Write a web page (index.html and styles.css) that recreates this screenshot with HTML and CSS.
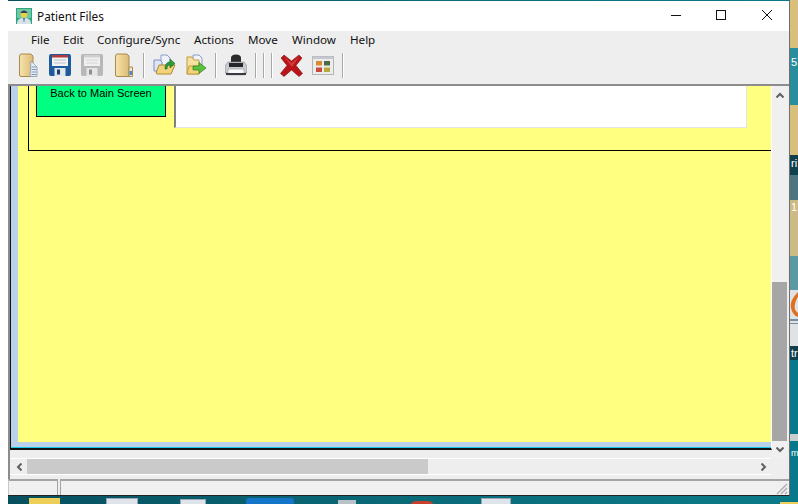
FILE: index.html
```html
<!DOCTYPE html>
<html lang="en">
<head>
  <meta charset="UTF-8">
  <title>Patient Files</title>
  <link rel="stylesheet" href="styles.css">
</head>
<body>
  <div class="desktop">
    <!-- bits of the desktop that show round the window -->
    <div class="strip">
      <div class="strip-part band-1"></div>
      <div class="strip-part band-2"><span class="strip-text s1">5</span></div>
      <div class="strip-part band-3"></div>
      <div class="strip-part band-4"><span class="strip-text s2">ri</span></div>
      <div class="strip-part band-5"></div>
      <div class="strip-part band-6"><span class="strip-text s3">1</span></div>
      <div class="strip-part band-7"></div>
      <div class="strip-part band-8">
        <svg class="flame-icon" width="8" height="34" viewBox="0 0 8 34"><path d="M8 2 C3 7 0 12 1 18 C2 23 5 26 8 27 L8 23 C5 21 4 18 5 14 C6 10 7 8 8 7Z" fill="#e07020"/><path d="M0 34h8M0 30h8" stroke="#7a8ea0" stroke-width="2"/></svg>
      </div>
      <div class="strip-part band-9"><span class="strip-text s4">tr</span></div>
      <div class="strip-part band-10"></div>
      <div class="strip-part band-11"></div>
      <div class="strip-part band-12"><span class="strip-text s5">m</span></div>
    </div>
    <div class="peek peek-folder"></div>
    <div class="peek peek-doc p1"></div>
    <div class="peek peek-doc p2"></div>
    <div class="peek peek-blue"></div>
    <div class="peek peek-grey"></div>
    <div class="peek peek-red"></div>
    <div class="peek peek-doc p3"></div>
    <div class="peek peek-yellow"></div>

    <div class="window">
      <div class="titlebar">
        <svg class="app-icon" width="16" height="16" viewBox="0 0 16 16">
          <rect width="16" height="16" fill="#2fa57f"/>
          <rect x="1" y="1" width="14" height="9" fill="#6fc9a8"/>
          <path d="M1 16 C1 11 4 10 8 10 C12 10 15 11 15 16Z" fill="#d8e2ea"/>
          <path d="M7 10h2l-1 5z" fill="#5a7088"/>
          <circle cx="8" cy="6.500" r="3.200" fill="#e8d040"/>
          <path d="M4.500 5 C5 1.500 11 1.500 11.500 5Z" fill="#39424a"/>
        </svg>
        <span class="title-text">Patient Files</span>
        <div class="win-buttons">
          <svg class="win-btn" width="46" height="30" viewBox="0 0 46 30"><path d="M20 14.500h10" stroke="#111"/></svg>
          <svg class="win-btn" width="46" height="30" viewBox="0 0 46 30"><rect x="19.500" y="9.500" width="9" height="9" fill="none" stroke="#111"/></svg>
          <svg class="win-btn" width="46" height="30" viewBox="0 0 46 30"><path d="M19 9l10 10M29 9l-10 10" stroke="#111"/></svg>
        </div>
      </div>

      <div class="menubar">
        <span class="menu-item m-file">File</span>
        <span class="menu-item m-edit">Edit</span>
        <span class="menu-item m-conf">Configure/Sync</span>
        <span class="menu-item m-actions">Actions</span>
        <span class="menu-item m-move">Move</span>
        <span class="menu-item m-window">Window</span>
        <span class="menu-item m-help">Help</span>
      </div>

      <div class="toolbar">
        <svg class="tool t1" width="20" height="25" viewBox="0 0 20 25">
          <defs>
            <linearGradient id="tan" x1="0" y1="0" x2="1" y2="0"><stop offset="0" stop-color="#f6e3ac"/><stop offset="1" stop-color="#dcbc74"/></linearGradient>
          </defs>
          <path d="M1.500 3 Q1.500 1 3.500 1 L13 1 L15 3 L15 23.500 L3 23.500 Q1.500 23.500 1.500 22Z" fill="url(#tan)" stroke="#a98a4e"/>
          <path d="M13 8l6 6v9.500h-7z" fill="#e8eef6" stroke="#8a99ad" stroke-width=".8"/>
          <path d="M13.500 14h5M13.500 16.500h5M13.500 19h5M13.500 21.500h5" stroke="#7d95b8"/>
        </svg>
        <svg class="tool t2" width="22" height="22" viewBox="0 0 22 22">
          <rect width="22" height="22" rx="2" fill="#1f5a9c"/>
          <rect x="3" y="1" width="16" height="11" fill="#f2f2f2"/>
          <rect x="3" y="1" width="16" height="2.500" fill="#b23a3a"/>
          <path d="M5 6h12M5 9h12" stroke="#b9c4d0"/>
          <rect x="5.500" y="14" width="11" height="8" fill="#dfe6ee"/>
          <rect x="8" y="15.500" width="3" height="5" fill="#1f3f68"/>
        </svg>
        <svg class="tool t3" width="22" height="22" viewBox="0 0 22 22">
          <rect width="22" height="22" rx="2" fill="#b8b8b8"/>
          <rect x="3" y="1" width="16" height="11" fill="#f0f0f0"/>
          <rect x="3" y="1" width="16" height="2.500" fill="#cfcfcf"/>
          <path d="M5 6h12M5 9h12" stroke="#d4d4d4"/>
          <rect x="5.500" y="14" width="11" height="8" fill="#e6e6e6"/>
          <rect x="8" y="15.500" width="3" height="5" fill="#8e8e8e"/>
        </svg>
        <svg class="tool t4" width="20" height="25" viewBox="0 0 20 25">
          <path d="M1.500 3 Q1.500 1 3.500 1 L13 1 L15 3 L15 23.500 L3 23.500 Q1.500 23.500 1.500 22Z" fill="url(#tan)" stroke="#a98a4e"/>
          <path d="M15 14h3.500v9.500H15z" fill="#ece6d8" stroke="#a98a4e"/>
          <rect x="15.500" y="18" width="2.500" height="4" fill="#4f86c8"/>
        </svg>
        <span class="sep s-a"></span>
        <svg class="tool t5" width="23" height="22" viewBox="0 0 23 22">
          <path d="M8 1h6l3 3v11H8z" fill="#eef2fa" stroke="#8b9ac4"/>
          <path d="M1 6h6l2 2v9H1z" fill="#dfe5f6" stroke="#7f8fc0"/>
          <path d="M3 19l3-8h16l-4 9H4z" fill="#f2d27a" stroke="#b08a30"/>
          <path d="M12 15 C12 10 14 8 17 8 L17 5 L22 9.500 L17 14 L17 11 C15 11 14 12 14 15Z" fill="#2f9a3a" stroke="#1c6a24" stroke-width=".6"/>
        </svg>
        <svg class="tool t6" width="21" height="22" viewBox="0 0 21 22">
          <path d="M7 1h6l3 3v9H7z" fill="#eef2fa" stroke="#8b9ac4"/>
          <path d="M1 3h5l2 3h5v14H1z" fill="#f6e2a0" stroke="#c49a3a"/>
          <path d="M1 20l2-8h12l-2 8z" fill="#f3d27c" stroke="#c49a3a"/>
          <path d="M7 12h6V8.500l7 5.500-7 5.500V16H7z" fill="#58c23c" stroke="#2c8024" stroke-width=".7"/>
        </svg>
        <span class="sep s-b"></span>
        <svg class="tool t7" width="22" height="23" viewBox="0 0 22 23">
          <path d="M6 10V4 Q6 0.500 11 0.500 Q16 0.500 16 4V10Z" fill="#2d2a2e"/>
          <path d="M3 8h16l3 4v7H0v-7z" fill="#c8ccd2" stroke="#7c8088" stroke-width=".6"/>
          <rect x="4" y="9" width="14" height="4" fill="#26262a"/>
          <rect x="3" y="15" width="16" height="6" fill="#f8f8f8" stroke="#9a9a9a" stroke-width=".6"/>
          <path d="M1 19h20v2H1z" fill="#3a3a40"/>
        </svg>
        <span class="sep s-c"></span>
        <span class="sep s-d"></span>
        <span class="sep s-e"></span>
        <svg class="tool t8" width="23" height="23" viewBox="0 0 23 23">
          <path d="M1 4l3-3 7.500 6L19 1l3 3-6 7.500 6.500 8L19 22.500 11.500 16 4 22.500.5 19.500 7 11.500z" fill="#bb1418" stroke="#7e0d10" stroke-width=".6"/>
          <path d="M4 2.500l7.500 6.500 7.500-6.500-6 9-1.500 1z" fill="#e0555a" opacity=".6"/>
        </svg>
        <svg class="tool t9" width="22" height="19" viewBox="0 0 22 19">
          <rect x=".5" y=".5" width="21" height="18" fill="#ececec" stroke="#b4b4b4"/>
          <rect x=".5" y=".5" width="21" height="2.500" fill="#c4c8d0"/>
          <rect x="4" y="5" width="6" height="4.500" fill="#d88a30"/>
          <rect x="12" y="5" width="6" height="4.500" fill="#4a6a48"/>
          <rect x="4" y="11.500" width="6" height="4.500" fill="#c84a3c"/>
          <rect x="12" y="11.500" width="6" height="4.500" fill="#b8a83a"/>
        </svg>
        <span class="sep s-f"></span>
      </div>

      <div class="middle">
        <div class="work">
          <div class="form">
            <div class="sheet">
              <div class="panel">
                <button class="back-btn">Back to Main Screen</button>
                <div class="notes"></div>
              </div>
            </div>
          </div>
        </div>
        <div class="vscroll">
          <svg class="arrow-up" width="8" height="6" viewBox="0 0 8 6"><path d="M0.500 5.500L4 2l3.500 3.500" fill="none" stroke="#606060" stroke-width="2"/></svg>
          <div class="vthumb"></div>
          <svg class="arrow-down" width="8" height="6" viewBox="0 0 8 6"><path d="M0.500 .5L4 4l3.500-3.500" fill="none" stroke="#606060" stroke-width="2"/></svg>
        </div>
      </div>

      <div class="hscroll">
        <span class="h-arrow">
          <svg width="6" height="8" viewBox="0 0 6 8"><path d="M5.500 .5L2 4l3.500 3.500" fill="none" stroke="#606060" stroke-width="2"/></svg>
        </span>
        <div class="hthumb"></div>
        <span class="h-arrow right">
          <svg width="6" height="8" viewBox="0 0 6 8"><path d="M.5 .5L4 4 .5 7.500" fill="none" stroke="#606060" stroke-width="2"/></svg>
        </span>
      </div>

      <div class="statusbar">
        <div class="pane pane-small"></div>
        <div class="pane pane-wide">
          <svg class="grip" width="12" height="12" viewBox="0 0 12 12"><path d="M11 1L1 11M11 5L5 11M11 9L9 11" stroke="#a8a8a8" stroke-width="1.200"/></svg>
        </div>
      </div>
    </div>
  </div>
</body>
</html>
```

FILE: styles.css
```css
* {
  margin: 0;
  padding: 0;
  box-sizing: border-box;
}

html, body {
  width: 798px;
  height: 504px;
  overflow: hidden;
  background: #fff;
}

.desktop {
  position: relative;
  margin-left: 8px;
  width: 790px;
  height: 504px;
  padding-top: 1px;
  background: linear-gradient(90deg, #064f5f, #0a6a78 50%, #0b7a88);
  overflow: hidden;
}

/* right hand strip of wallpaper */
.strip {
  position: absolute;
  top: 0;
  right: 0;
  width: 8px;
  height: 504px;
  display: flex;
  flex-direction: column;
}

.strip-part {
  position: relative;
  flex: none;
  overflow: hidden;
}

.band-1 { height: 48px; background: #d9bf7c; }
.band-2 { height: 57px; background: #2a8d9c; }
.band-3 { height: 50px; background: #d9bf7c; }
.band-4 { height: 20px; background: #123f4c; }
.band-5 { height: 25px; background: #4d7480; }
.band-6 { height: 56px; background: #cdbb86; }
.band-7 { height: 34px; background: #5b9aa2; }
.band-8 { height: 56px; background: #dfe3e6; }
.band-9 { height: 14px; background: #123f4c; }
.band-10 { height: 74px; background: #08798a; }
.band-11 { height: 7px; background: #c9ced0; }
.band-12 { height: 63px; background: #08798a; }

.flame-icon { display: block; }

.strip-text {
  position: absolute;
  left: 1px;
  color: #fff;
  font: 11px "Liberation Sans", sans-serif;
  line-height: 12px;
  white-space: nowrap;
}

.s1 { top: 8px; }
.s2 { top: 2px; }
.s3 { top: 1px; }
.s4 { top: 1px; }
.s5 { top: 6px; font-size: 9px; }

.peek {
  position: absolute;
  top: 498px;
  height: 6px;
}

.peek-folder { left: 21px; width: 31px; background: #edcf58; }
.peek-doc { background: #dfe4ea; border: 1px solid #9aa6b2; border-bottom: 0; }
.p1 { left: 98px; width: 32px; }
.p2 { left: 172px; width: 26px; top: 499px; }
.p3 { left: 473px; width: 30px; }
.peek-blue { left: 238px; width: 48px; background: #1474c8; border-radius: 3px 3px 0 0; }
.peek-grey { left: 330px; width: 18px; top: 500px; background: #b9c2c6; }
.peek-red { left: 402px; width: 24px; top: 501px; background: #c8412e; border-radius: 12px 12px 0 0; }
.peek-yellow { left: 772px; width: 18px; top: 502px; background: #edcf58; }

.window {
  position: relative;
  width: 782px;
  height: 495px;
  background: #eeeeee;
  border-right: 1px solid #6f6f6f;
  border-bottom: 1px solid #222;
  display: flex;
  flex-direction: column;
  font-family: "Noto Sans", "Open Sans", sans-serif;
  color: #111;
}

.titlebar {
  flex: none;
  height: 30px;
  background: #fff;
  display: flex;
  align-items: center;
  padding-left: 8px;
}

.title-text {
  margin-left: 5px;
  font-size: 11.8px;
}

.win-buttons {
  margin-left: auto;
  display: flex;
}

.win-btn { display: block; }

.menubar {
  flex: none;
  height: 20px;
  position: relative;
  font-size: 11.6px;
  line-height: 18px;
}

.menu-item {
  position: absolute;
  top: 0;
}

.m-file { left: 23px; }
.m-edit { left: 55px; }
.m-conf { left: 89px; }
.m-actions { left: 186px; }
.m-move { left: 240px; }
.m-window { left: 284px; }
.m-help { left: 342px; }

.toolbar {
  flex: none;
  height: 35px;
  display: flex;
  align-items: center;
  padding-left: 10px;
  padding-bottom: 5px;
  border-bottom: 2px solid #8c8c8c;
}

.tool { flex: none; display: block; }
.sep {
  flex: none;
  width: 2px;
  height: 25px;
  background: linear-gradient(90deg, #a8a8a8 50%, #fff 50%);
}

.t2 { margin-left: 11px; }
.t3 { margin-left: 10px; }
.t4 { margin-left: 11px; }
.s-a { margin-left: 9px; }
.t5 { margin-left: 8px; }
.t6 { margin-left: 10px; }
.s-b { margin-left: 8px; }
.t7 { margin-left: 8px; }
.s-c { margin-left: 8px; }
.s-d { margin-left: 6px; }
.s-e { margin-left: 6px; }
.t8 { margin-left: 7px; }
.t9 { margin-left: 9px; }
.s-f { margin-left: 8px; }

.middle {
  flex: none;
  height: 372px;
  display: flex;
}

.work {
  width: 764px;
  border-left: 2px solid #8c8c8c;
}

.form {
  height: 364px;
  background: #b9d1ea;
  border-left: 1px solid #111;
  border-right: 1px solid #fff;
  border-bottom: 2px solid #111;
  box-shadow: inset 0 -1px 0 #19c8e6;
  padding: 0 0 6px 7px;
}

.sheet {
  height: 100%;
  background: #ffff80;
  padding-left: 10px;
  overflow: hidden;
}

.panel {
  height: 65px;
  border-left: 1px solid #000;
  border-bottom: 1px solid #000;
  display: flex;
  align-items: flex-start;
  padding-left: 7px;
}

.back-btn {
  flex: none;
  width: 130px;
  height: 31px;
  background: #00ff80;
  border: 1px solid #000;
  border-top: 0;
  font: 11px "Liberation Sans", sans-serif;
  color: #000;
  padding-bottom: 17px;
}

.notes {
  flex: none;
  width: 573px;
  height: 42px;
  margin-left: 8px;
  background: #fff;
  border-left: 2px solid #808080;
  border-right: 1px solid #e3e3e3;
  border-bottom: 1px solid #e3e3e3;
}

.vscroll {
  width: 15px;
  display: flex;
  flex-direction: column;
  align-items: center;
  background: #f0f0f0;
}

.arrow-up { margin-top: 6px; flex: none; }
.vthumb {
  width: 15px;
  height: 159px;
  margin-top: 184px;
  background: #a6a6a6;
  flex: none;
}
.arrow-down { margin-top: 6px; flex: none; }

.hscroll {
  flex: none;
  height: 21px;
  padding-top: 1px;
  display: flex;
  align-items: flex-start;
  background: linear-gradient(#fff, #fff) no-repeat 0 0 / 761px 1px,
              linear-gradient(#fff, #fff) no-repeat 0 16px / 761px 1px;
  border-left: 2px solid #8c8c8c;
}

.h-arrow {
  width: 17px;
  height: 15px;
  display: flex;
  align-items: center;
  justify-content: center;
  flex: none;
}

.h-arrow.right {
  margin-left: 327px;
}

.hthumb {
  width: 401px;
  height: 15px;
  flex: none;
  background: #cacaca;
}

.statusbar {
  flex: none;
  height: 16px;
  display: flex;
  gap: 2px;
}

.pane {
  height: 100%;
  border-top: 2px solid #a4a4a4;
  background: #f0f0f0;
}

.pane-small {
  width: 50px;
  border-left: 1px solid #c8c8c8;
  border-right: 1px solid #a4a4a4;
}

.pane-wide {
  flex: 1;
  position: relative;
  border-left: 1px solid #a4a4a4;
}

.grip {
  position: absolute;
  right: 1px;
  bottom: 0;
}
```
